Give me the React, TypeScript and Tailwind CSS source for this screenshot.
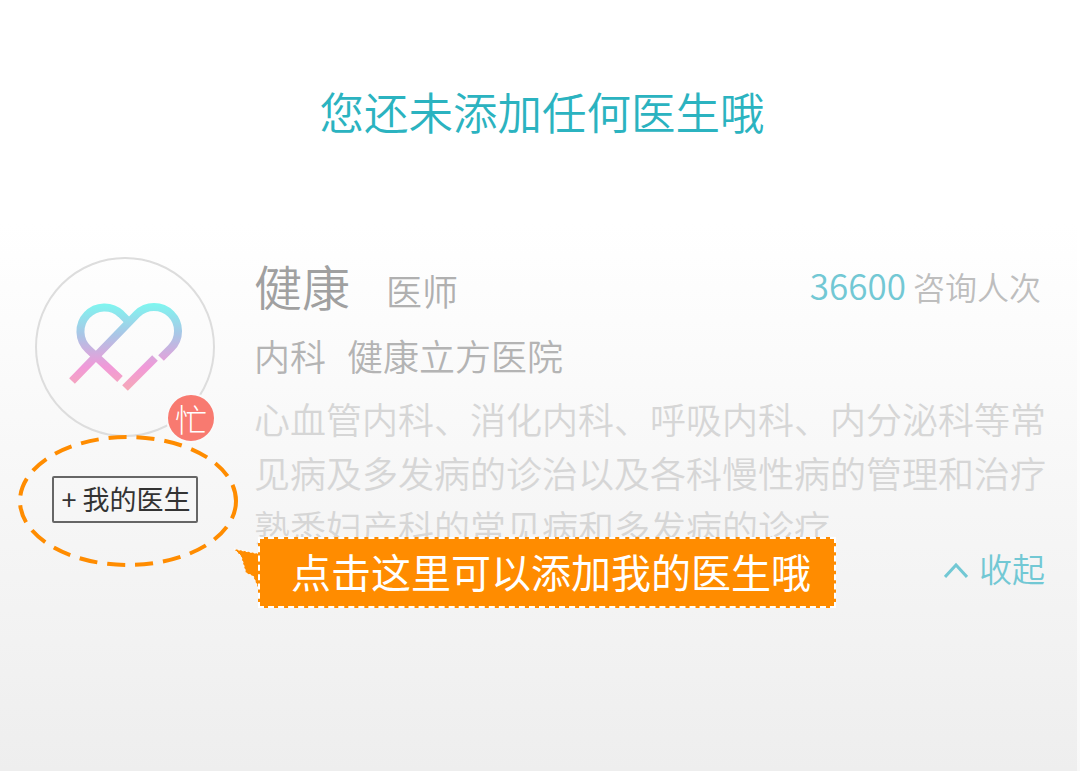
const cjk = { fontFamily: '"Noto Sans CJK SC", sans-serif' };

function LogoMark() {
    return (
        <svg className="absolute left-0 top-0" width="180" height="180" viewBox="35 257 180 180" fill="none">
            <defs>
                <linearGradient id="logoFade" gradientUnits="userSpaceOnUse" x1="0" y1="303" x2="0" y2="392">
                    <stop offset="0" stopColor="#7ef7f0" />
                    <stop offset="0.35" stopColor="#a9c6e6" />
                    <stop offset="0.72" stopColor="#f199d8" />
                    <stop offset="1" stopColor="#f6aab4" />
                </linearGradient>
            </defs>
            <g stroke="url(#logoFade)" strokeWidth="8">
                <path d="M72 381 L137 314 A24 24 0 0 1 171 348 L161 358" />
                <path d="M155 358 L125 388" />
                <path d="M120 379 L88 349 A24 24 0 0 1 121 314 L130 323" />
            </g>
        </svg>
    );
}

export default function App() {
    return (
        <div className="relative h-[771px] w-[1080px] overflow-hidden bg-gradient-to-b from-white from-[29%] to-[#eeeeee]" style={cjk}>
            <div className="flex h-[222px] items-center justify-center pl-[4px] text-[44.5px] font-[350] text-[#2bb3c0]">
                您还未添加任何医生哦
            </div>

            <div className="flex pl-[35px] pt-[35px]">
                <div className="flex w-[180px] flex-col items-center">
                    <div className="relative h-[180px] w-[180px] rounded-full border-2 border-[#dddddd]">
                        <div className="absolute -left-[2px] -top-[2px]">
                            <LogoMark />
                        </div>
                        <div className="absolute left-[129px] top-[134px] flex h-[50px] w-[50px] items-center justify-center rounded-full border-2 border-[#fafafa] bg-[#f87a70] text-[32px] font-light text-white">
                            忙
                        </div>
                    </div>
                    <button className="mt-[39px] flex h-[47px] w-[146px] items-center justify-center rounded-[2px] border-2 border-[#666666] pb-[2px] pl-[2px] text-[27px] leading-none text-[#333333]">
                        + 我的医生
                    </button>
                </div>

                <div className="-mt-[2px] ml-[39px] w-[792px]">
                    <div className="flex h-[60px] items-baseline">
                        <span className="text-[48px] font-[350] leading-[60px] text-[#a0a0a0]">健康</span>
                        <span className="ml-[36px] text-[36px] font-[350] text-[#b0b0b0]">医师</span>
                        <span className="ml-auto self-start pr-[5px] text-[32px] font-[350] leading-[60px] text-[#bebebe]">
                            <span className="text-[35px] text-[#72c8d4]">36600</span> 咨询人次
                        </span>
                    </div>
                    <div className="mt-[13px] flex h-[54px] items-center text-[36px] font-[350] text-[#b4b4b4]">
                        <span>内科</span>
                        <span className="ml-[21px]">健康立方医院</span>
                    </div>
                    <p className="mt-[9px] text-[36px] font-[350] leading-[54px] text-[#d6d6d6]">
                        心血管内科、消化内科、呼吸内科、内分泌科等常见病及多发病的诊治以及各科慢性病的管理和治疗熟悉妇产科的常见病和多发病的诊疗
                    </p>
                    <div className="mt-px flex h-[30px] items-center justify-end pr-px text-[33px] font-[350] text-[#72c8d4]">
                        <svg className="mr-[11px] mt-[2px]" width="24" height="16" viewBox="0 0 24 16" fill="none" stroke="#72c8d4" strokeWidth="3">
                            <path d="M1 15 L12 3 L23 15" />
                        </svg>
                        收起
                    </div>
                </div>
            </div>

            {/* guide overlay */}
            <svg className="absolute left-[16px] top-[434px]" width="224" height="136" viewBox="0 0 224 136" fill="none">
                <ellipse cx="112" cy="67" rx="108" ry="64" stroke="#ff8c00" strokeWidth="4" strokeDasharray="18 10" />
            </svg>
            <svg className="absolute left-[233px] top-[548px]" width="28" height="46" viewBox="0 0 28 46">
                <path d="M1 1 L27 6 L27 44 L20 28 L13 25 L8 8 Z" fill="#ff8c00" stroke="#ffffff" strokeWidth="1" strokeDasharray="2 2" />
            </svg>
            <div className="absolute left-[258px] top-[537px] flex h-[71px] w-[578px] items-center border-2 border-dashed border-white bg-[#ff8c00] pb-[4px] pl-[31px] text-[40px] font-normal leading-none text-white">
                点击这里可以添加我的医生哦
            </div>
            <div className="absolute right-0 top-0 h-full w-[3px] bg-white/60" />
        </div>
    );
}
